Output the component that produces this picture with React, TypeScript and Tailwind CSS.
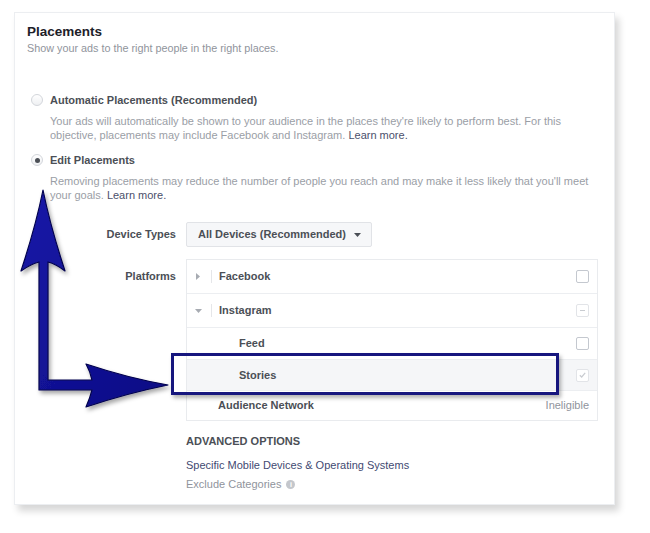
const font = "font-['Liberation_Sans',Arial,sans-serif]";

function Radio({ checked }: { checked?: boolean }) {
  return (
    <span className="flex h-[12px] w-[12px] items-center justify-center rounded-full border border-[#d3d6db] bg-gradient-to-b from-white to-[#eef0f2]">
      {checked && <span className="h-[5px] w-[5px] rounded-full bg-[#4b4f56]" />}
    </span>
  );
}

function Box({ kind }: { kind?: "dash" | "check" }) {
  const light = kind !== undefined;
  return (
    <span
      className={
        "flex h-[13px] w-[13px] items-center justify-center rounded-[2px] border bg-white " +
        (light ? "border-[#e2e4e8]" : "border-[#c4c8cf]")
      }
    >
      {kind === "dash" && <span className="h-[1px] w-[5px] bg-[#c9ccd1]" />}
      {kind === "check" && (
        <svg width="7" height="6" viewBox="0 0 7 6">
          <path d="M0.8 3.2 L2.7 5 L6.2 0.8" fill="none" stroke="#c9ccd1" strokeWidth="1.2" />
        </svg>
      )}
    </span>
  );
}

function Toggle({ open }: { open?: boolean }) {
  return (
    <span className="flex w-[20px] items-center">
      <span className="flex w-[12px] justify-center">
        {open ? (
          <svg width="7" height="4" viewBox="0 0 7 4">
            <path d="M0 0 H7 L3.5 4 Z" fill="#a7abb2" />
          </svg>
        ) : (
          <svg width="4" height="7" viewBox="0 0 4 7">
            <path d="M0 0 V7 L4 3.5 Z" fill="#a7abb2" />
          </svg>
        )}
      </span>
      <span className="ml-[7px] h-[13px] w-px bg-[#e5e6e9]" />
    </span>
  );
}

function Arrow() {
  return (
    <svg className="pointer-events-none absolute left-0 top-0" width="200" height="430" viewBox="0 0 200 430">
      <defs>
        <linearGradient id="ab" x1="0" y1="0" x2="1" y2="1">
          <stop offset="0" stopColor="#1a1aa8" />
          <stop offset="1" stopColor="#0a0a84" />
        </linearGradient>
        <filter id="sh" x="-20%" y="-20%" width="140%" height="140%">
          <feDropShadow dx="2" dy="3" stdDeviation="2" floodColor="#000" floodOpacity="0.35" />
        </filter>
      </defs>
      <path
        d="M43 190 Q50 225 65 271 Q56 264 48 262 L48 380 L92 380 Q90 371 86 364 Q128 378 168 385 Q128 393 86 407 Q90 398 92 390 L39 390 L39 262 Q31 264 21 271 Q36 225 43 190 Z"
        fill="url(#ab)"
        stroke="#05054f"
        strokeWidth="1.2"
        strokeLinejoin="round"
        filter="url(#sh)"
      />
    </svg>
  );
}

export default function App() {
  return (
    <div className={"relative h-[533px] w-[650px] overflow-hidden bg-white " + font}>
      <div className="ml-[14px] mt-[12px] h-[493px] w-[601px] border border-[#eceef1] bg-white pl-[12px] pr-[16px] pt-[11px] shadow-[4px_6px_7px_rgba(0,0,0,0.16)]">
        <h1 className="text-[13.5px] font-bold leading-4 text-[#1d2129]">Placements</h1>
        <p className="text-[10.8px] leading-4 text-[#90949c]">Show your ads to the right people in the right places.</p>

        <div className="mt-[36px] flex h-4 items-center">
          <span className="ml-[4px]">
            <Radio />
          </span>
          <span className="ml-[7px] text-[11px] font-bold text-[#4b4f56]">Automatic Placements (Recommended)</span>
        </div>
        <p className="ml-[23px] mt-[6px] whitespace-nowrap text-[11px] leading-[14px] text-[#9a9ea6]">
          Your ads will automatically be shown to your audience in the places they're likely to perform best. For this
          <br />
          objective, placements may include Facebook and Instagram. <span className="text-[#4b4f6b]">Learn more.</span>
        </p>

        <div className="mt-[10px] flex h-4 items-center">
          <span className="ml-[4px]">
            <Radio checked />
          </span>
          <span className="ml-[7px] text-[11px] font-bold text-[#4b4f56]">Edit Placements</span>
        </div>
        <p className="ml-[23px] mt-[6px] whitespace-nowrap text-[11px] leading-[14px] text-[#9a9ea6]">
          Removing placements may reduce the number of people you reach and may make it less likely that you'll meet
          <br />
          your goals. <span className="text-[#4b4f6b]">Learn more.</span>
        </p>

        <div className="mt-[20px] flex items-center gap-[10px]">
          <span className="w-[149px] text-right text-[11px] font-bold text-[#4b4f56]">Device Types</span>
          <div className="flex h-[25px] w-[186px] items-center rounded-[2px] border border-[#e1e3e7] bg-[#f6f7f9] pl-[11px]">
            <span className="text-[11px] font-bold text-[#4b4f56]">All Devices (Recommended)</span>
            <svg className="ml-[8px]" width="7" height="4" viewBox="0 0 7 4">
              <path d="M0 0 H7 L3.5 4 Z" fill="#4b4f56" />
            </svg>
          </div>
        </div>

        <div className="mt-[12px] flex items-start gap-[10px]">
          <span className="mt-[9px] w-[149px] text-right text-[11px] font-bold text-[#4b4f56]">Platforms</span>
          <div className="relative w-[412px] border border-[#e9ebee] text-[11px] font-bold text-[#4b4f56]">
            <div className="flex h-[34px] items-center border-b border-[#eceef1] pl-[5px] pr-[8px]">
              <Toggle />
              <span className="ml-[7px] flex-1">Facebook</span>
              <Box />
            </div>
            <div className="flex h-[34px] items-center border-b border-[#eceef1] pl-[5px] pr-[8px]">
              <Toggle open />
              <span className="ml-[7px] flex-1">Instagram</span>
              <Box kind="dash" />
            </div>
            <div className="flex h-[32px] items-center border-b border-[#eceef1] pl-[52px] pr-[8px]">
              <span className="flex-1">Feed</span>
              <Box />
            </div>
            <div className="flex h-[31px] items-center border-b border-[#eceef1] bg-[#f5f6f8] pl-[52px] pr-[8px]">
              <span className="flex-1">Stories</span>
              <Box kind="check" />
            </div>
            <div className="flex h-[29px] items-center pl-[31px] pr-[8px]">
              <span className="flex-1">Audience Network</span>
              <span className="font-normal text-[#90949c]">Ineligible</span>
            </div>
            <div className="absolute left-[-16px] top-[93px] h-[42px] w-[388px] border-[3px] border-[#16167e] shadow-[2px_3px_4px_rgba(0,0,0,0.3)]" />
          </div>
        </div>

        <div className="ml-[159px]">
          <div className="mt-[12px] text-[11px] font-bold leading-4 text-[#4b4f56]">ADVANCED OPTIONS</div>
          <div className="mt-[8px] text-[11px] leading-4 text-[#3f4a72]">Specific Mobile Devices &amp; Operating Systems</div>
          <div className="mt-[3px] flex items-center text-[11px] leading-4 text-[#90949c]">
            Exclude Categories
            <span className="ml-[5px] flex h-[9px] w-[9px] items-center justify-center rounded-full bg-[#c4c7cc] text-[7px] font-bold leading-none text-white">
              i
            </span>
          </div>
        </div>
      </div>
      <Arrow />
    </div>
  );
}
